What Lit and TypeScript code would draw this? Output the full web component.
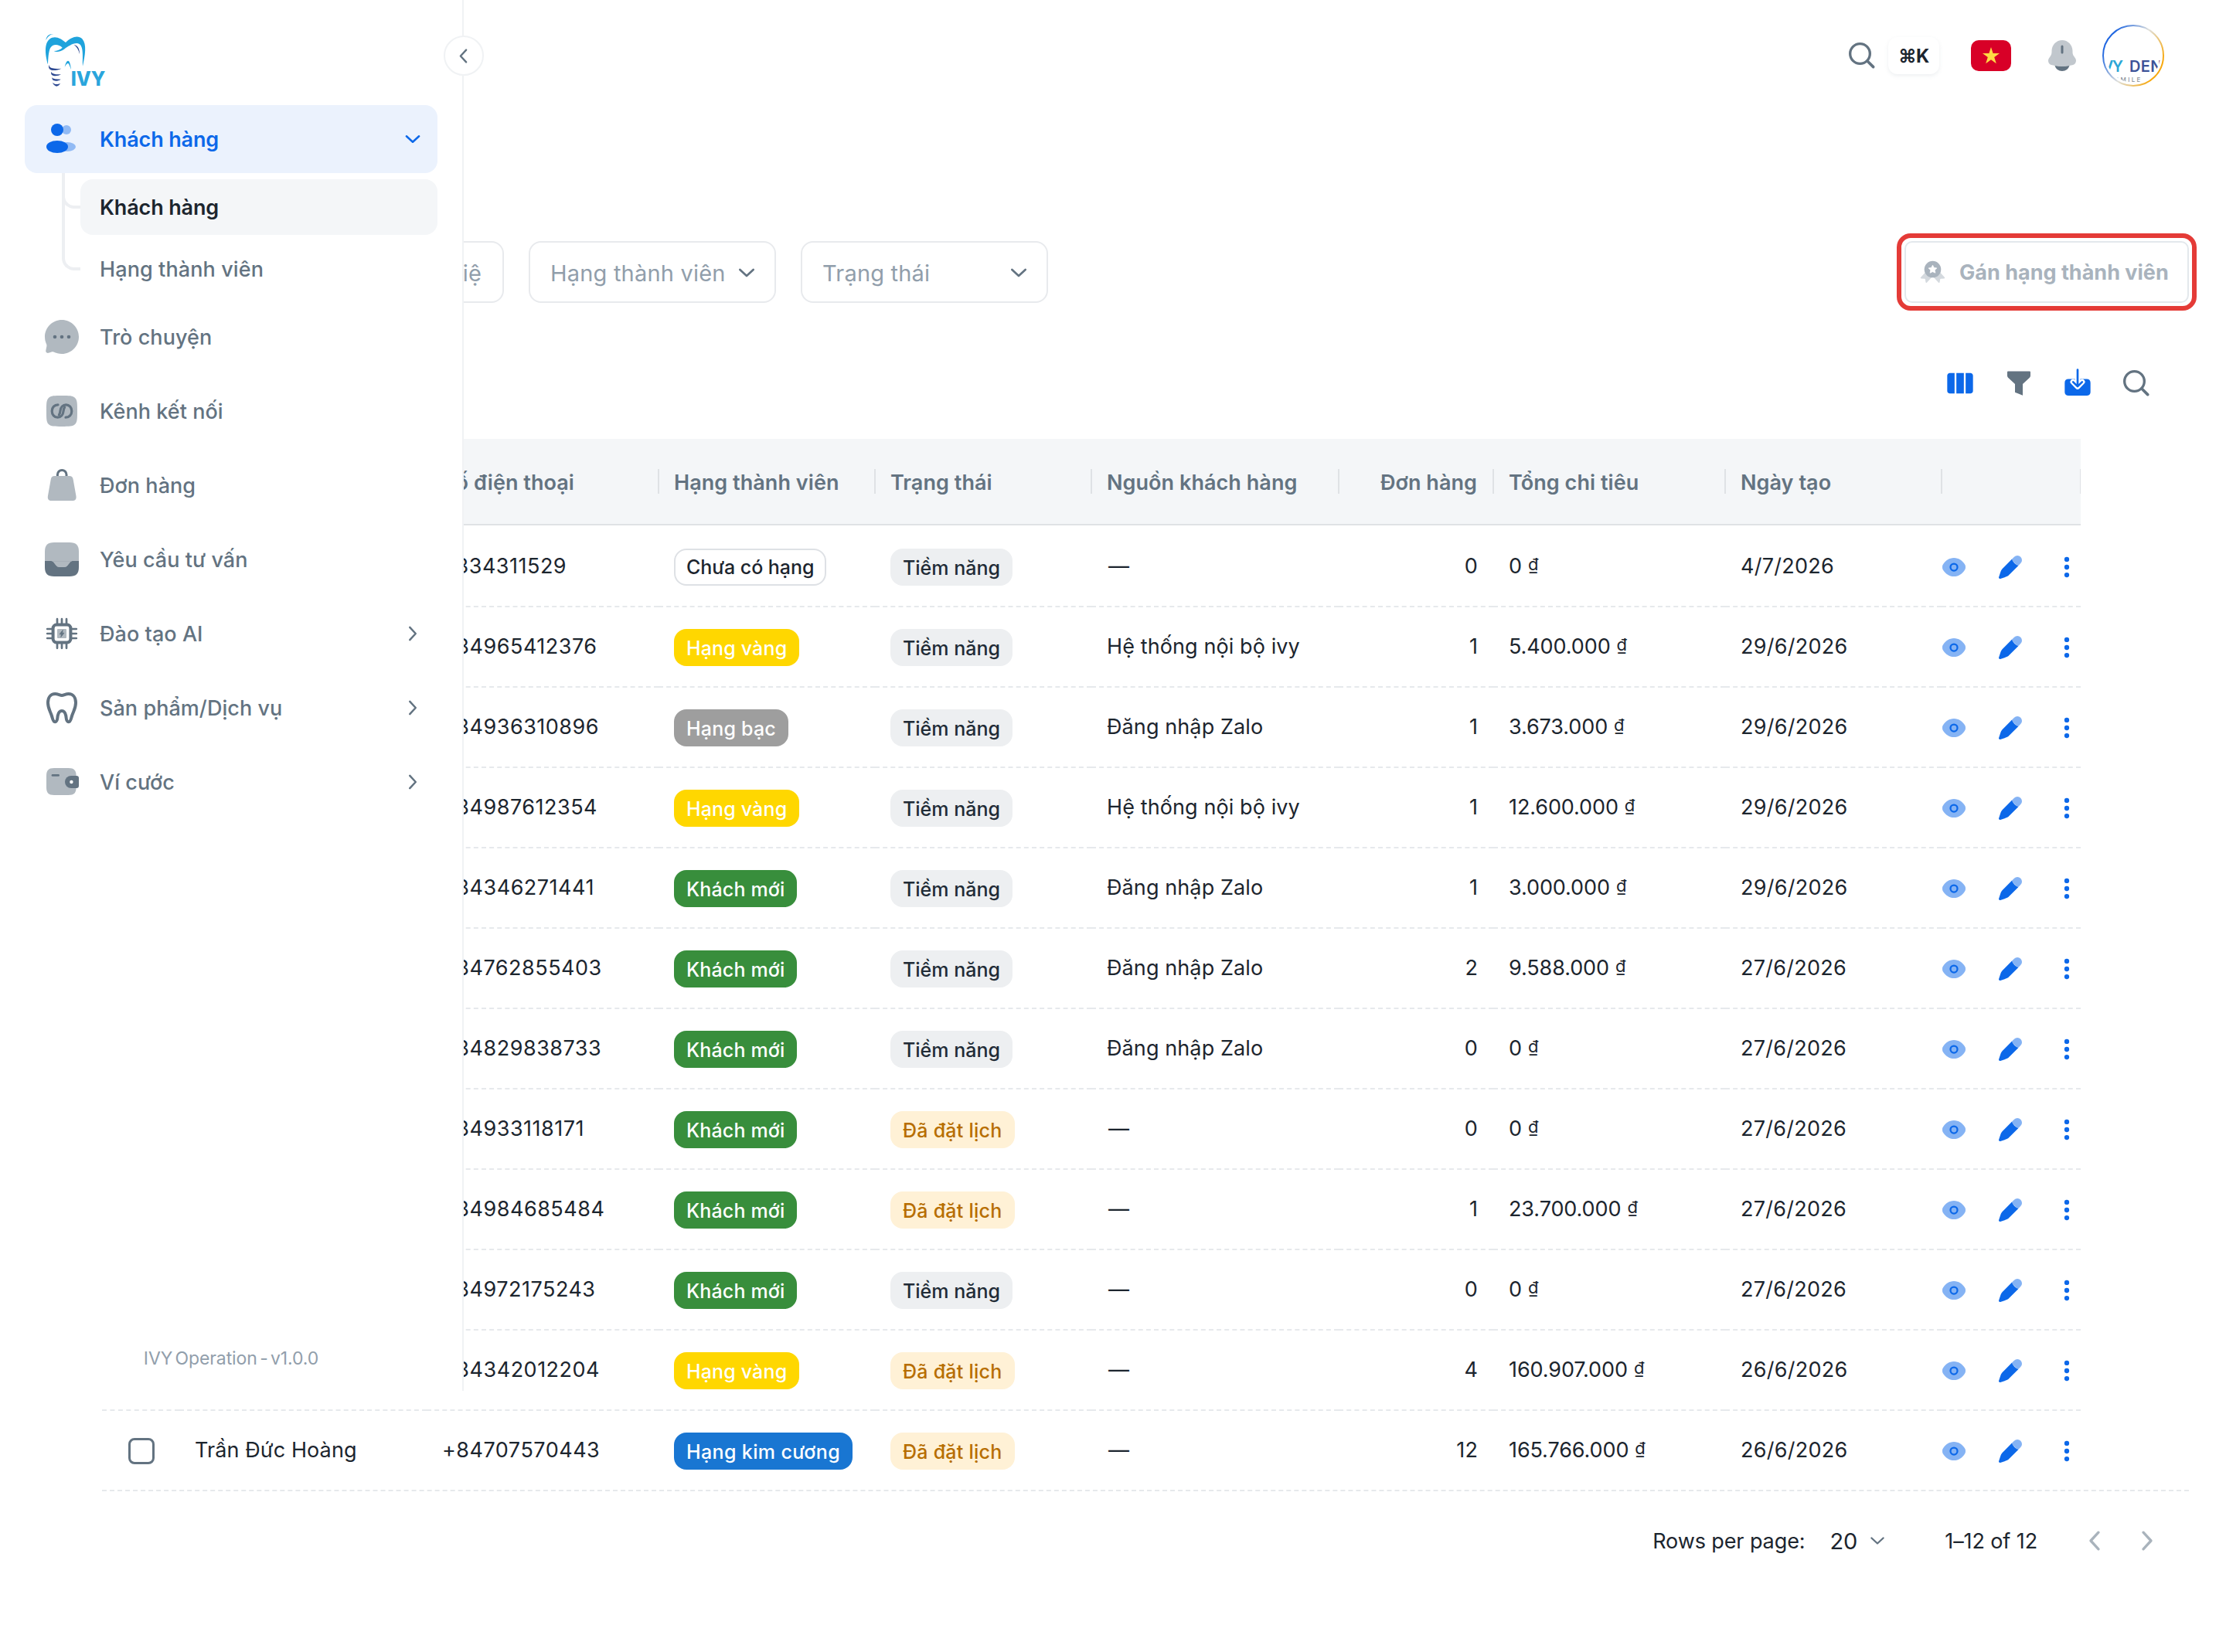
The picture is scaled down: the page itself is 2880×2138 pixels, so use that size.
import { LitElement, html, css, svg, nothing } from "lit";
import { customElement, property } from "lit/decorators.js";
import { classMap } from "lit/directives/class-map.js";

const icons: Record<string, unknown> = {
  users: svg`
    <g opacity=".4">
      <circle cx="15" cy="6" r="3" />
      <ellipse cx="15.5" cy="17" rx="5.500" ry="3" />
    </g>
    <circle cx="9" cy="6" r="4" />
    <ellipse cx="9" cy="17" rx="7" ry="4" />`,
  chat: svg`
    <path opacity=".5" d="M12 23c6.075 0 11-4.925 11-11S18.075 1 12 1 1 5.925 1 12c0 1.6.35 3.1.95 4.5.3.6.35 1.1.2 1.7l-.5 2.6c-.2 1.2.7 1.9 1.75 1.6l1.9-.7c.5-.15.9-.1 1.4.1 1.6.8 3.4 1.2 5.3 1.2" />
    <circle cx="7.5" cy="12" r="1.15" />
    <circle cx="12" cy="12" r="1.15" />
    <circle cx="16.5" cy="12" r="1.15" />`,
  link: svg`
    <path opacity=".5" d="M12 2c4.7 0 7.1 0 8.55 1.45S22 7.3 22 12s0 7.1-1.45 8.55S16.7 22 12 22s-7.1 0-8.55-1.45S2 16.7 2 12s0-7.1 1.45-8.55S7.3 2 12 2" />
    <g fill="none" stroke="currentColor" stroke-width="1.6" stroke-linecap="round">
      <path d="M9.5 7.900C7.200 7.900 5.600 9.700 5.600 12s1.600 4.100 3.700 4.100c2 0 3.500-1.700 3.700-3.900.1-1.300.3-2 .8-2.700" />
      <path d="M14.500 16.100c2.300 0 3.900-1.800 3.900-4.100s-1.600-4.100-3.700-4.100c-2 0-3.500 1.700-3.700 3.900-.1 1.300-.3 2-.8 2.700" />
    </g>`,
  bag: svg`
    <path fill="none" stroke="currentColor" stroke-width="1.5" d="M9.2 6.5V5.1a2.9 2.9 0 0 1 5.8 0v1.4" />
    <path class="light" d="M7.4 6h9.4c1.5 0 2.2.7 2.5 2.1l1.9 10.6c.4 2.2-.4 3.3-2.6 3.3H5.6C3.4 22 2.6 20.9 3 18.7L4.9 8.1C5.2 6.7 5.9 6 7.400 6" />`,
  inbox: svg`
    <path opacity=".5" d="M7 1h10c4.2 0 6 1.8 6 6v6.100H1V7c0-4.2 1.8-6 6-6" />
    <path opacity=".5" d="M4.600 13c1 0 1.600.300 2.200 1l1.500 1.900c.700.800 1.300 1.100 2.300 1.100h2.800c1 0 1.600-.300 2.300-1.100l1.500-1.900c.600-.700 1.200-1 2.200-1z" />
    <path d="M1 13h3.600c1 0 1.600.3 2.200 1l1.500 1.900c.7.8 1.300 1.100 2.300 1.100h2.800c1 0 1.600-.3 2.300-1.100l1.500-1.900c.6-.7 1.200-1 2.200-1H23v4c0 4.200-1.800 6-6 6H7c-4.200 0-6-1.800-6-6z" />`,
  chip: svg`
    <g fill="none" stroke="currentColor" stroke-width="1.35" stroke-linecap="round">
      <path d="M9 2.6V6M12 2.6V6M15 2.6V6M9 18v3.4M12 18v3.4M15 18v3.4M2.6 9H6M2.6 12H6M2.6 15H6M18 9h3.4M18 12h3.4M18 15h3.4" />
    </g>
    <rect x="6.3" y="6.3" width="11.4" height="11.4" rx="2.2" fill="none" stroke="currentColor" stroke-width="2" />
    <rect opacity=".5" x="9" y="9" width="6" height="6" rx=".5" />
    <path d="M12.6 9.8 10.6 12.4h1.2l-.4 1.8 2-2.6h-1.2z" stroke="currentColor" stroke-width=".5" />`,
  tooth: svg`
    <path fill="none" stroke="currentColor" stroke-width="2" stroke-linejoin="round" d="M12 4c-1.300 0-2.400-1-4.400-1C4.800 3 3 5.300 3 8.700c0 3.500 1.300 5.100 2.400 8.300.700 2 .8 4.100 2.200 4.100 1.800 0 1.400-2.400 1.800-4.100.4-1.800 1-3 2.600-3s2.200 1.200 2.600 3c.4 1.700 0 4.100 1.800 4.100 1.400 0 1.500-2.100 2.200-4.100C19.700 13.800 21 12.200 21 8.700 21 5.300 19.200 3 16.400 3c-2 0-3.100 1-4.400 1Z" />`,
  wallet: svg`
    <path opacity=".5" d="M7 3h9.3c3.6 0 5 1.5 5 5v7.5c0 3.5-1.4 5-5 5H7c-3.6 0-5-1.5-5-5V8c0-3.5 1.4-5 5-5" />
    <path fill="none" stroke="currentColor" stroke-width="1.4" stroke-linecap="round" d="M6 7.7h3.8" />
    <path d="M18 8h3.5c1 0 1.5.5 1.5 1.5v5c0 1-.5 1.5-1.5 1.5H18a4 4 0 0 1 0-8" />
    <circle cx="18.200" cy="12" r="1.100" fill="#fff" />`,
  down: svg`<path class="line" d="m5.5 9 6.500 6 6.500-6" />`,
  right: svg`<path class="line" d="m9 5.5 6 6.5-6 6.5" />`,
  left: svg`<path class="line" d="m15 5.5-6 6.5 6 6.5" />`,
  search: svg`
    <circle cx="10.5" cy="10.500" r="7.700" fill="none" stroke="currentColor" stroke-width="2" />
    <path fill="none" stroke="currentColor" stroke-width="2.2" stroke-linecap="round" d="m16.200 16.200 4.600 4.600" />`,
  bell: svg`
    <path opacity=".4" d="M18.75 9v.704c0 .845.24 1.671.692 2.374l1.108 1.723c1.011 1.574.239 3.713-1.52 4.21a25.8 25.8 0 0 1-14.06 0c-1.759-.497-2.531-2.636-1.52-4.21l1.108-1.723a4.4 4.4 0 0 0 .693-2.374V9c0-3.866 3.022-7 6.749-7s6.75 3.134 6.75 7" />
    <path d="M12.75 6a.75.75 0 0 0-1.5 0v4a.75.75 0 0 0 1.5 0zM7.243 18.545a5.002 5.002 0 0 0 9.513 0c-3.145.59-6.367.59-9.513 0" />`,
  columns: svg`
    <path d="M4.5 4.1H7.7V19.9H4.5A2 2 0 0 1 2 17.9V6.1A2 2 0 0 1 4.5 4.1M9.1 4.1h5.8v15.8H9.1zM16.3 4.1h3.2a2 2 0 0 1 2.5 2v11.8a2 2 0 0 1-2.5 2h-3.2z" />`,
  funnel: svg`
    <path d="M3.8 2.7h16.4c.5 0 .8.3.8.8v2.4c0 .9-.2 1.3-.8 1.9L15 12.6v8.900l-6-2.500v-6.400L3.8 7.8C3.2 7.2 3 6.8 3 5.9V3.5c0-.5.3-.8.8-.8" />`,
  download: svg`
    <path d="M5 8.7h14c2 0 3 1 3 3v6.900c0 2-1 3-3 3H5c-2 0-3-1-3-3v-6.900c0-2 1-3 3-3" />
    <path fill="none" stroke="#fff" stroke-width="4.200" stroke-linecap="round" stroke-linejoin="round" d="M12 8v5.4M8.400 10.900l3.600 3.700 3.600-3.700" />
    <path fill="none" stroke="currentColor" stroke-width="1.600" stroke-linecap="round" stroke-linejoin="round" d="M12 1.500v12.700M8.500 11l3.500 3.500 3.500-3.500" />`,
  medal: svg`
    <path opacity=".5" d="m6.2 11.2-4.800 5.300c-.4.5-.1 1 .5 1l2.700.1c.5 0 .7.2.8.7l.4 2.500c.1.6.6.7 1 .3L12 15.500l5.200 5.600c.4.4.9.3 1-.3l.4-2.500c.1-.5.3-.7.8-.7l2.700-.1c.6 0 .9-.5.5-1l-4.800-5.300z" />
    <circle cx="12" cy="9.3" r="7.4" />
    <path fill="#fff" d="m12 5.6 1.2 2.200 2.500.4-1.800 1.800.4 2.500-2.300-1.100-2.300 1.100.4-2.500-1.800-1.800 2.500-.4z" stroke="#fff" stroke-linejoin="round" stroke-width=".5" />`,
  eye: svg`
    <path opacity=".5" d="M2 12c0 1.64.425 2.191 1.275 3.296C4.972 17.5 7.818 20 12 20s7.028-2.5 8.725-4.704C21.575 14.192 22 13.639 22 12c0-1.64-.425-2.191-1.275-3.296C19.028 6.5 16.182 4 12 4S4.972 6.5 3.275 8.704C2.425 9.81 2 10.361 2 12" />
    <circle cx="12" cy="12" r="3" fill="none" stroke="currentColor" stroke-width="1.5" />`,
  pen: svg`
    <path class="tip" d="M20.848 8.713a3.932 3.932 0 0 0-5.561-5.561l-2.400 2.400 5.560 5.560z" />
    <path d="m11.4 18.161 7.396-7.396a10.3 10.3 0 0 1-3.326-2.234 10.3 10.3 0 0 1-2.235-3.327L5.839 12.600c-.577.577-.866.866-1.114 1.184a6.600 6.600 0 0 0-.749 1.211c-.173.364-.302.752-.56 1.526l-1.362 4.083a1.060 1.060 0 0 0 1.342 1.342l4.083-1.362c.775-.258 1.162-.387 1.526-.56q.647-.308 1.211-.749c.318-.248.607-.537 1.184-1.114" />`,
  dots: svg`
    <circle cx="12" cy="5.300" r="2.100" />
    <circle cx="12" cy="12" r="2.100" />
    <circle cx="12" cy="18.700" r="2.100" />`,
};

@customElement("ui-icon")
export class UIIcon extends LitElement {
  static styles = css`
    :host {
      display: inline-flex;
      flex: none;
      width: 48px;
      height: 48px;
    }
    svg {
      width: 100%;
      height: 100%;
      fill: currentColor;
    }
    .line {
      fill: none;
      stroke: currentColor;
      stroke-width: 2;
      stroke-linecap: round;
      stroke-linejoin: round;
    }
    .light {
      fill: #b1b9c0;
    }
    .tip {
      fill: #85b3f4;
    }
  `;

  @property() name = "";

  render() {
    return html`<svg viewBox="0 0 24 24">${icons[this.name]}</svg>`;
  }
}

@customElement("side-nav")
export class SideNav extends LitElement {
  static styles = css`
    :host {
      display: flex;
      flex-direction: column;
      box-sizing: border-box;
      padding: 0 32px;
      background: #fff;
      border-right: 2px solid #f0f2f4;
      color: #637381;
      font-size: 27px;
      font-weight: 500;
      letter-spacing: 0.05px;
    }
    .logo {
      width: 120px;
      height: 100px;
      margin: 30px 0 6px 8px;
    }
    .toggle {
      position: absolute;
      top: 46px;
      right: -28px;
      display: flex;
      align-items: center;
      justify-content: center;
      box-sizing: border-box;
      width: 52px;
      height: 52px;
      padding-right: 2px;
      background: #fff;
      border: 2px solid #f0f2f4;
      border-radius: 50%;
    }
    .toggle ui-icon {
      width: 29px;
      height: 29px;
    }
    .menu {
      display: flex;
      flex-direction: column;
      gap: 8px;
    }
    .item {
      display: flex;
      align-items: center;
      gap: 25px;
      box-sizing: border-box;
      height: 88px;
      padding: 0 16px 0 24px;
      border-radius: 16px;
    }
    .item.active {
      background: #ebf2fd;
      color: #0c68e9;
      font-weight: 600;
      letter-spacing: -0.15px;
    }
    .label {
      flex: 1;
    }
    .arrow {
      width: 30px;
      height: 30px;
      padding: 1px;
    }
    .sub {
      display: flex;
      flex-direction: column;
      gap: 8px;
      margin: 8px 0 0 48px;
      padding-left: 24px;
    }
    .sub-item {
      position: relative;
      display: flex;
      align-items: center;
      height: 72px;
      padding-left: 25px;
      border-radius: 16px;
      letter-spacing: 0.1px;
    }
    .sub-item.active {
      background: #f4f6f8;
      color: #1c252e;
      font-weight: 600;
      letter-spacing: -0.15px;
    }
    /* tree line that ties a sub item to its parent */
    .sub-item::before {
      content: "";
      position: absolute;
      left: -24px;
      bottom: 34px;
      width: 20px;
      height: 100px;
      border-left: 4px solid #edeff2;
      border-bottom: 4px solid #edeff2;
      border-bottom-left-radius: 16px;
    }
    .sub-item:first-child::before {
      height: 42px;
    }
    .version {
      margin-top: auto;
      padding-bottom: 28px;
      color: #919eab;
      text-align: center;
      font-size: 23px;
      font-weight: 400;
      line-height: 28px;
      letter-spacing: -0.1px;
      word-spacing: -3px;
    }
  `;

  items = [
    { icon: "chat", label: "Trò chuyện" },
    { icon: "link", label: "Kênh kết nối" },
    { icon: "bag", label: "Đơn hàng" },
    { icon: "inbox", label: "Yêu cầu tư vấn" },
    { icon: "chip", label: "Đào tạo AI", arrow: true },
    { icon: "tooth", label: "Sản phẩm/Dịch vụ", arrow: true },
    { icon: "wallet", label: "Ví cước", arrow: true },
  ];

  renderLogo() {
    return html`
      <svg class="logo" viewBox="0 0 360 300">
        <g fill="#1fa3dc">
          <path d="M66 160C56 125 50 80 72 62c20-16 44-4 63 13 22-22 48-30 64-14 19 20 11 66 2 106-1-38 5-82-18-88-19-4-38 12-54 22-16 10-30 12-40 7 14-1 25-5 33-13-14-14-38-16-47 2-7 16-8 40-9 63Z" />
          <path d="M58 66c2-17 14-26 30-24-14 2-22 10-30 24Z" />
          <path d="M131 170c4-16 8-24 13-24 6 0 10 14 12 34-5-12-8-24-12-24-4 0-8 6-13 14Z" />
        </g>
        <g fill="#2e4a92">
          <path d="M167 83c16 4 22 18 22 37-4-16-10-28-22-37Z" />
          <path d="M71 161c-6 12 2 22 16 22 12 0 22-2 31-7-13 1-24 1-34-1-9-2-14-6-13-14Z" />
          <path d="M79 188c-3 11 4 17 16 17 9 0 15-2 22-6-10 0-18 0-26-2-6-2-11-4-12-9Z" />
          <path d="M82 210c-1 9 4 14 14 14 8 0 14-2 20-6-8 0-15 0-22-1-6-2-11-3-12-7Z" />
          <path d="M84 230c2 7 9 13 15 15 6-2 13-5 15-12-5 3-10 4-15 4-5 0-10-3-15-7Z" />
        </g>
        <text x="155" y="243" font-size="78" font-weight="800" fill="#2aa5dc" textLength="134" lengthAdjust="spacingAndGlyphs">IVY</text>
      </svg>
    `;
  }

  render() {
    return html`
      ${this.renderLogo()}
      <div class="toggle"><ui-icon name="left"></ui-icon></div>
      <div class="menu">
        <div>
          <div class="item active">
            <ui-icon name="users"></ui-icon>
            <span class="label">Khách hàng</span>
            <ui-icon class="arrow" name="down"></ui-icon>
          </div>
          <div class="sub">
            <div class="sub-item active">Khách hàng</div>
            <div class="sub-item">Hạng thành viên</div>
          </div>
        </div>
        ${this.items.map(
          (item) => html`
            <div class="item">
              <ui-icon name=${item.icon}></ui-icon>
              <span class="label">${item.label}</span>
              ${item.arrow
                ? html`<ui-icon class="arrow" name="right"></ui-icon>`
                : nothing}
            </div>
          `
        )}
      </div>
      <div class="version">IVY Operation - v1.0.0</div>
    `;
  }
}

@customElement("top-bar")
export class TopBar extends LitElement {
  static styles = css`
    :host {
      display: flex;
      align-items: center;
      justify-content: flex-end;
      height: 144px;
      padding-right: 80px;
      color: #637381;
    }
    .search {
      width: 40px;
      height: 40px;
      margin-right: 14px;
    }
    .kbd {
      display: flex;
      align-items: center;
      justify-content: center;
      width: 66px;
      height: 48px;
      margin-right: 41px;
      border-radius: 12px;
      box-shadow: 0 2px 5px rgba(145, 158, 171, 0.16);
      color: #1c252e;
      font-size: 24px;
      font-weight: 700;
      letter-spacing: -0.5px;
    }
    .flag {
      width: 52px;
      height: 40px;
      margin-right: 42px;
    }
    .bell {
      margin-right: 28px;
    }
    .avatar {
      width: 80px;
      height: 80px;
    }
  `;

  render() {
    return html`
      <ui-icon class="search" name="search"></ui-icon>
      <div class="kbd">⌘K</div>
      <svg class="flag" viewBox="0 0 52 40">
        <rect width="52" height="40" rx="10" fill="#d80027" />
        <path fill="#ffda44" d="m26 9 2.6 8H37l-6.8 5 2.6 8.2L26 25.200l-6.800 5 2.600-8.200-6.800-5h8.400z" />
      </svg>
      <ui-icon class="bell" name="bell"></ui-icon>
      <svg class="avatar" viewBox="0 0 80 80">
        <defs>
          <linearGradient id="ring" x1="0" y1=".2" x2="1" y2=".8">
            <stop offset="0.1" stop-color="#1f66e0" />
            <stop offset="0.5" stop-color="#dfe0dc" />
            <stop offset="0.9" stop-color="#f7a80d" />
          </linearGradient>
          <clipPath id="face"><circle cx="40" cy="40" r="35" /></clipPath>
        </defs>
        <circle cx="40" cy="40" r="39" fill="#fff" stroke="url(#ring)" stroke-width="2" />
        <g clip-path="url(#face)" font-weight="600">
          <text x="-4" y="61" font-size="20" fill="#2ba6d6" textLength="31">IVY</text>
          <text x="35" y="61" font-size="20" fill="#3d5398" textLength="56">DENT</text>
          <text x="16" y="74" font-size="8" font-weight="500" fill="#8a8f98" textLength="44">SMILE -</text>
        </g>
      </svg>
    `;
  }
}

interface Customer {
  name?: string;
  phone: string;
  rank: string;
  status: string;
  source?: string;
  orders: number;
  total: string;
  created: string;
}

const rankClass: Record<string, string> = {
  "Chưa có hạng": "none",
  "Hạng vàng": "gold",
  "Hạng bạc": "silver",
  "Khách mới": "fresh",
  "Hạng kim cương": "diamond",
};

@customElement("customer-table")
export class CustomerTable extends LitElement {
  static styles = css`
    :host {
      display: block;
      color: #1c252e;
      font-size: 27px;
    }
    .row {
      display: grid;
      grid-template-columns: 100px 320px 300px 280px 280px 320px 200px 300px 280px 180px;
      width: 2560px;
      white-space: nowrap;
    }
    .head {
      box-sizing: border-box;
      height: 112px;
      margin-bottom: 2px;
      overflow: hidden;
      background: #f4f6f8;
      border-bottom: 2px solid #dfe2e5;
      color: #637381;
      font-weight: 600;
      letter-spacing: 0.05px;
    }
    .th {
      display: flex;
      align-items: center;
      justify-content: space-between;
      padding: 2px 0 0 20px;
    }
    .th::after {
      content: "";
      width: 2px;
      height: 32px;
      margin: 0 -1px 2px auto;
      background: #dfe2e5;
    }
    .th.num::after {
      margin-left: 20px;
    }
    .th.num {
      justify-content: flex-end;
    }
    .td {
      display: flex;
      align-items: center;
      box-sizing: border-box;
      height: 104px;
      padding: 0 20px 2px;
      border-bottom: 2px dashed #e6e9ec;
      letter-spacing: 0.1px;
    }
    .tag {
      padding: 2px 20px 0;
      letter-spacing: 0;
    }
    .num {
      justify-content: flex-end;
    }
    .check {
      justify-content: center;
      padding: 2px 0 0 2px;
    }
    .box {
      box-sizing: border-box;
      width: 34px;
      height: 34px;
      border: 3px solid #637381;
      border-radius: 8px;
    }
    .phone {
      letter-spacing: 0.5px;
    }
    .total {
      letter-spacing: -0.1px;
    }
    .unit {
      margin-left: 8px;
      padding-bottom: 5px;
      font-size: 22px;
    }
    .date {
      letter-spacing: 0.25px;
    }
    .dash {
      padding-left: 22px;
    }
    .actions {
      justify-content: flex-end;
      gap: 37px;
      padding: 2px 0 0;
      color: #0c68e9;
    }
    .actions ui-icon {
      width: 36px;
      height: 36px;
    }
    .chip {
      display: flex;
      align-items: center;
      box-sizing: border-box;
      height: 48px;
      padding: 1px 16px 0;
      border-radius: 16px;
      color: #fff;
      font-size: 25px;
      font-weight: 500;
    }
    .none {
      padding: 0 14px;
      background: #fff;
      border: 2px solid #dee1e5;
      color: #1c252e;
      letter-spacing: -0.05px;
    }
    .gold {
      background: #ffd700;
      letter-spacing: 0.15px;
    }
    .silver {
      background: #9e9e9e;
      letter-spacing: 0.2px;
    }
    .fresh {
      background: #388e3c;
      letter-spacing: 0.15px;
    }
    .diamond {
      background: #1976d2;
      letter-spacing: 0.36px;
    }
    .potential {
      background: #edeff1;
      color: #212b36;
    }
    .booked {
      background: #fff1d6;
      color: #b76e00;
      letter-spacing: 0.25px;
    }
    .last .td {
      border-bottom-color: transparent;
    }
    .rule {
      width: 2700px;
      margin-top: -2px;
      border-bottom: 2px dashed #e6e9ec;
    }
  `;

  headers = [
    "",
    "Tên khách hàng",
    "Số điện thoại",
    "Hạng thành viên",
    "Trạng thái",
    "Nguồn khách hàng",
    "Đơn hàng",
    "Tổng chi tiêu",
    "Ngày tạo",
    "",
  ];

  customers: Customer[] = [
    { phone: "0334311529", rank: "Chưa có hạng", status: "Tiềm năng", orders: 0, total: "0", created: "4/7/2026" },
    { phone: "+84965412376", rank: "Hạng vàng", status: "Tiềm năng", source: "Hệ thống nội bộ ivy", orders: 1, total: "5.400.000", created: "29/6/2026" },
    { phone: "+84936310896", rank: "Hạng bạc", status: "Tiềm năng", source: "Đăng nhập Zalo", orders: 1, total: "3.673.000", created: "29/6/2026" },
    { phone: "+84987612354", rank: "Hạng vàng", status: "Tiềm năng", source: "Hệ thống nội bộ ivy", orders: 1, total: "12.600.000", created: "29/6/2026" },
    { phone: "+84346271441", rank: "Khách mới", status: "Tiềm năng", source: "Đăng nhập Zalo", orders: 1, total: "3.000.000", created: "29/6/2026" },
    { phone: "+84762855403", rank: "Khách mới", status: "Tiềm năng", source: "Đăng nhập Zalo", orders: 2, total: "9.588.000", created: "27/6/2026" },
    { phone: "+84829838733", rank: "Khách mới", status: "Tiềm năng", source: "Đăng nhập Zalo", orders: 0, total: "0", created: "27/6/2026" },
    { phone: "+84933118171", rank: "Khách mới", status: "Đã đặt lịch", orders: 0, total: "0", created: "27/6/2026" },
    { phone: "+84984685484", rank: "Khách mới", status: "Đã đặt lịch", orders: 1, total: "23.700.000", created: "27/6/2026" },
    { phone: "+84972175243", rank: "Khách mới", status: "Tiềm năng", orders: 0, total: "0", created: "27/6/2026" },
    { phone: "+84342012204", rank: "Hạng vàng", status: "Đã đặt lịch", orders: 4, total: "160.907.000", created: "26/6/2026" },
    { name: "Trần Đức Hoàng", phone: "+84707570443", rank: "Hạng kim cương", status: "Đã đặt lịch", orders: 12, total: "165.766.000", created: "26/6/2026" },
  ];

  renderRow(c: Customer, last: boolean) {
    const statusClass = c.status === "Tiềm năng" ? "potential" : "booked";
    return html`
      <div class=${classMap({ row: true, last })}>
        <div class="td check"><span class="box"></span></div>
        <div class="td">${c.name ?? nothing}</div>
        <div class="td phone">${c.phone}</div>
        <div class="td tag"><span class="chip ${rankClass[c.rank]}">${c.rank}</span></div>
        <div class="td tag"><span class="chip ${statusClass}">${c.status}</span></div>
        <div class=${classMap({ td: true, dash: !c.source })}>${c.source ?? "—"}</div>
        <div class="td num">${c.orders}</div>
        <div class="td total">${c.total}<span class="unit">₫</span></div>
        <div class="td date">${c.created}</div>
        <div class="td actions">
          <ui-icon name="eye"></ui-icon>
          <ui-icon name="pen"></ui-icon>
          <ui-icon name="dots"></ui-icon>
        </div>
      </div>
    `;
  }

  render() {
    return html`
      <div class="row head">
        ${this.headers.map(
          (h) => html`<div class=${classMap({ th: true, num: h === "Đơn hàng" })}>${h}</div>`
        )}
      </div>
      ${this.customers.map((c, i) =>
        this.renderRow(c, i === this.customers.length - 1)
      )}
      <div class="rule"></div>
    `;
  }
}

@customElement("app-root")
export class AppRoot extends LitElement {
  static styles = css`
    :host {
      display: block;
      position: relative;
      box-sizing: border-box;
      width: 2880px;
      height: 2138px;
      overflow: hidden;
      background: #fff;
      color: #1c252e;
      font-family: Inter, "Liberation Sans", sans-serif;
    }
    side-nav {
      position: absolute;
      top: 0;
      left: 0;
      width: 600px;
      height: 1800px;
    }
    .content {
      padding: 168px 48px 0 132px;
    }
    .filters {
      display: flex;
      align-items: center;
      gap: 32px;
    }
    .field {
      display: flex;
      align-items: center;
      justify-content: space-between;
      box-sizing: border-box;
      width: 320px;
      height: 80px;
      padding: 2px 20px 0 26px;
      border: 2px solid #e8eaed;
      border-radius: 16px;
      color: #919eab;
      font-size: 29px;
      letter-spacing: 0.2px;
      white-space: nowrap;
    }
    .field.keyword {
      width: 520px;
      justify-content: flex-end;
      padding-right: 27px;
    }
    .field ui-icon {
      width: 32px;
      height: 32px;
      color: #637381;
    }
    .assign {
      position: relative;
      display: flex;
      align-items: center;
      gap: 17px;
      box-sizing: border-box;
      width: 368px;
      height: 80px;
      margin-left: auto;
      padding-left: 17px;
      border: 2px solid #e3e8ec;
      border-radius: 10px;
      color: #a9b3bd;
      font-size: 27px;
      font-weight: 700;
      white-space: nowrap;
    }
    .assign::after {
      content: "";
      position: absolute;
      inset: -12px;
      border: 6px solid #e43b37;
      border-radius: 18px;
    }
    .assign ui-icon {
      width: 35px;
      height: 35px;
    }
    .tools {
      display: flex;
      justify-content: flex-end;
      gap: 36px;
      padding: 84px 48px 52px 0;
      color: #637381;
    }
    .tools ui-icon {
      width: 40px;
      height: 40px;
    }
    .tools .on {
      color: #0c68e9;
    }
    .pager {
      display: flex;
      align-items: center;
      justify-content: flex-end;
      height: 128px;
      padding-right: 34px;
      font-size: 27px;
      letter-spacing: -0.1px;
    }
    .size {
      display: flex;
      align-items: center;
      gap: 12px;
      margin: 0 73px 0 32px;
      font-size: 29px;
    }
    .size ui-icon {
      width: 28px;
      height: 28px;
      color: #637381;
    }
    .pages {
      display: flex;
      gap: 28px;
      margin-left: 54px;
      color: #a9b3bc;
    }
    .pages ui-icon {
      width: 40px;
      height: 40px;
    }
  `;

  render() {
    return html`
      <top-bar></top-bar>
      <div class="content">
        <div class="filters">
          <div class="field keyword">iệ</div>
          <div class="field">Hạng thành viên<ui-icon name="down"></ui-icon></div>
          <div class="field">Trạng thái<ui-icon name="down"></ui-icon></div>
          <div class="assign"><ui-icon name="medal"></ui-icon>Gán hạng thành viên</div>
        </div>
        <div class="tools">
          <ui-icon class="on" name="columns"></ui-icon>
          <ui-icon name="funnel"></ui-icon>
          <ui-icon class="on" name="download"></ui-icon>
          <ui-icon name="search"></ui-icon>
        </div>
        <customer-table></customer-table>
        <div class="pager">
          <span>Rows per page:</span>
          <div class="size">20<ui-icon name="down"></ui-icon></div>
          <span>1–12 of 12</span>
          <div class="pages">
            <ui-icon name="left"></ui-icon>
            <ui-icon name="right"></ui-icon>
          </div>
        </div>
      </div>
      <side-nav></side-nav>
    `;
  }
}
